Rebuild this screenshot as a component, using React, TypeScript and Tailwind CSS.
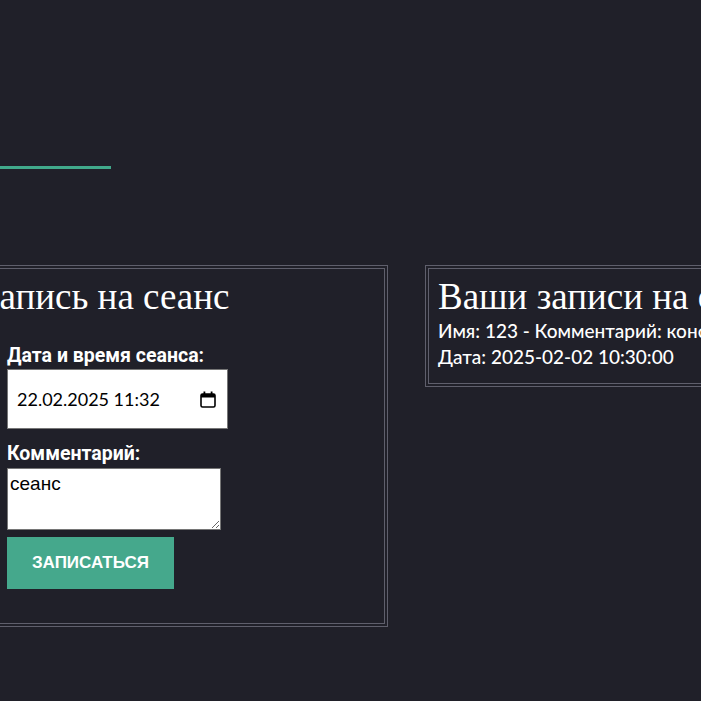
import React from "react";

function CalendarIcon() {
  return (
    <svg width="16" height="17" viewBox="0 0 16 17" className="shrink-0">
      <rect x="1" y="3" width="14" height="13" rx="1.5" fill="none" stroke="#000" strokeWidth="1.6" />
      <rect x="1" y="3" width="14" height="3.5" fill="#000" />
      <rect x="3.5" y="0.5" width="1.8" height="3.5" fill="#000" />
      <rect x="10.7" y="0.5" width="1.8" height="3.5" fill="#000" />
    </svg>
  );
}

function BookingForm() {
  return (
    <div className="w-[420px] shrink-0 border-4 border-double border-[#5f5f6c] px-[9px] pt-[9px] pb-[34px]">
      <h2 className="font-['Liberation_Serif',serif] text-[37px] leading-[37px] text-white">
        Запись на сеанс
      </h2>
      <form className="pl-[26px] pt-[30px]" onSubmit={(e) => e.preventDefault()}>
        <label className="block font-['Roboto',sans-serif] font-bold text-[19.5px] leading-[22px] text-white">
          Дата и время сеанса:
        </label>
        <div className="mt-[2px] flex h-[60px] w-[221px] items-center justify-between border border-[#767676] bg-white pl-[9px] pr-[11px]">
          <span className="font-['Lato',sans-serif] text-[18px] text-black">22.02.2025 11:32</span>
          <CalendarIcon />
        </div>
        <label className="mt-[14px] block font-['Roboto',sans-serif] font-bold text-[19.5px] leading-[22px] text-white">
          Комментарий:
        </label>
        <textarea
          defaultValue="сеанс"
          className="mt-[3px] block h-[62px] w-[214px] border border-[#767676] bg-white px-[2px] py-[1px] font-['Liberation_Sans',sans-serif] text-[19px] text-black outline-none"
        />
        <button
          type="submit"
          className="mt-[7px] h-[52px] w-[167px] bg-[#45a88c] font-['Liberation_Sans',sans-serif] text-[17px] font-bold text-white"
        >
          ЗАПИСАТЬСЯ
        </button>
      </form>
    </div>
  );
}

function MyBookings() {
  return (
    <div className="w-[440px] shrink-0 border-4 border-double border-[#5f5f6c] px-[9px] pt-[9px] pb-[13px]">
      <h2 className="font-['Liberation_Serif',serif] text-[37px] leading-[37px] text-white whitespace-nowrap">
        Ваши записи на сеанс
      </h2>
      <div className="mt-[3px] font-['Lato',sans-serif] font-medium text-[19px] leading-[26px] text-white">
        <p className="whitespace-nowrap">Имя: 123 - Комментарий: консультация</p>
        <p className="whitespace-nowrap">Дата: 2025-02-02 10:30:00</p>
      </div>
    </div>
  );
}

export default function App() {
  return (
    <div className="min-h-screen overflow-hidden bg-[#202029]">
      <div className="pt-[166px]">
        <div className="h-[3px] w-[111px] bg-[#41a98b]" />
      </div>
      <div className="ml-[-32px] mt-[96px] flex items-start gap-[37px]">
        <BookingForm />
        <MyBookings />
      </div>
    </div>
  );
}
